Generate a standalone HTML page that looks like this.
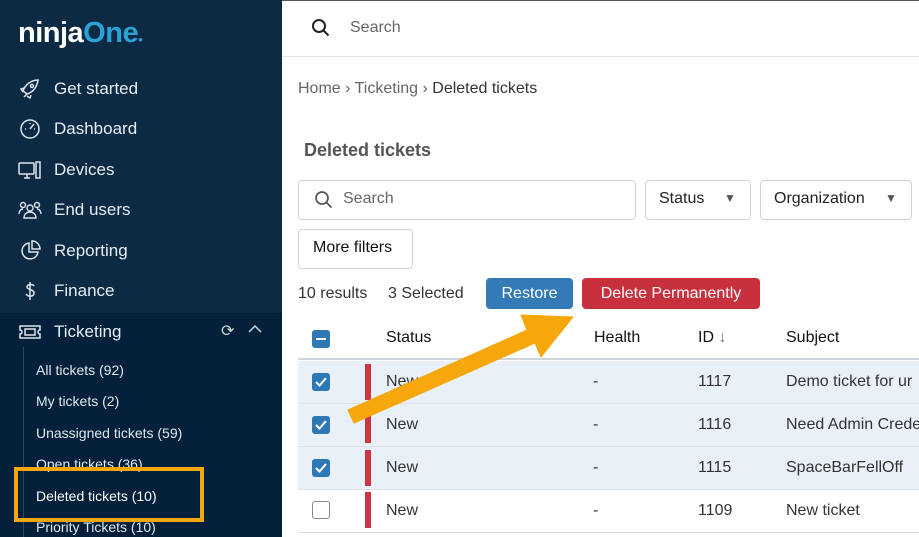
<!DOCTYPE html><html><head><style>
*{margin:0;padding:0;box-sizing:border-box}
body{width:919px;height:537px;overflow:hidden;font-family:"Liberation Sans",sans-serif;background:#fff;position:relative}
.sb{position:absolute;left:0;top:0;width:282px;height:537px;background:#0c2a44}
.sb2{position:absolute;left:0;top:313px;width:282px;height:224px;background:#05203a}
.logo{position:absolute;left:18px;top:17px;font-size:29px;font-weight:bold;color:#fff;letter-spacing:-0.5px}
.logo span{color:#29a3d8}
.nav{position:absolute;left:54px;color:#e6edf3;font-size:17px}
.ic{position:absolute;left:18px;width:24px;height:24px}
.sub{position:absolute;left:36px;color:#e0e7ee;font-size:14px}
.t{position:absolute;white-space:nowrap}
.box{position:absolute;border:1px solid #cfd3d8;border-radius:4px;background:#fff}
.row{position:absolute;left:298px;width:621px;height:43px;border-bottom:1px solid #dde1e6}
.cb{position:absolute;left:312px;width:18px;height:18px;border-radius:3px;background:#2f78b6}
.red{position:absolute;left:365px;width:6px;height:36px;background:#d03344}
</style></head><body>
<div style="position:absolute;left:0;top:0;width:919px;height:1px;background:#555"></div>
<div class="sb"></div><div class="sb2"></div>
<div class="logo">ninja<span>One</span><span style="font-size:8px">●</span></div>
<svg class="ic" style="top:77px" viewBox="0 0 24 24" fill="none" stroke="#dfe6ec" stroke-width="1.5"><path d="M5 14c2-6 8-11 15-11-1 7-5 12-11 14zM9 17l-3 3M6 11l-3 1 2 3M13 18l-1 3-3-2"/><circle cx="14" cy="9" r="1.5"/></svg>
<div class="nav" style="top:79px">Get started</div>
<svg class="ic" style="top:117px" viewBox="0 0 24 24" fill="none" stroke="#dfe6ec" stroke-width="1.5"><circle cx="12" cy="12" r="9"/><path d="M12 12l4-5M7 12h1M12 6v1M16 12h1"/></svg>
<div class="nav" style="top:119px">Dashboard</div>
<svg class="ic" style="top:158px" viewBox="0 0 24 24" fill="none" stroke="#dfe6ec" stroke-width="1.5"><rect x="1" y="5" width="15" height="11" rx="1"/><path d="M6 20h6M9 16v4"/><rect x="18" y="4" width="4" height="16"/></svg>
<div class="nav" style="top:160px">Devices</div>
<svg class="ic" style="top:198px" viewBox="0 0 24 24" fill="none" stroke="#dfe6ec" stroke-width="1.4"><circle cx="5" cy="7" r="2.5"/><circle cx="19" cy="7" r="2.5"/><circle cx="12" cy="10" r="3"/><path d="M6 20c0-4 3-6 6-6s6 2 6 6zM1 16c0-3 2-5 4-5M23 16c0-3-2-5-4-5"/></svg>
<div class="nav" style="top:200px">End users</div>
<svg class="ic" style="top:239px" viewBox="0 0 24 24" fill="none" stroke="#dfe6ec" stroke-width="1.5"><path d="M11 4a8 8 0 1 0 9 9h-9zM14 2v8h8a8 8 0 0 0-8-8z"/></svg>
<div class="nav" style="top:241px">Reporting</div>
<svg class="ic" style="top:279px" viewBox="0 0 24 24" fill="none" stroke="#dfe6ec" stroke-width="1.5"><path d="M16 7c-1-2-7-2-7 1s7 2 7 6-6 4-8 1M12 3v18"/></svg>
<div class="nav" style="top:281px">Finance</div>
<svg class="ic" style="top:320px" viewBox="0 0 24 24" fill="none" stroke="#dfe6ec" stroke-width="1.5"><path d="M2 6h20v4a2 2 0 0 0 0 4v4H2v-4a2 2 0 0 0 0-4z"/><rect x="7" y="9" width="10" height="6"/></svg>
<div class="nav" style="top:322px">Ticketing</div>
<div class="t" style="left:221px;top:321px;color:#cfd8e0;font-size:16px">⟳</div>
<svg style="position:absolute;left:248px;top:324px" width="14" height="10" viewBox="0 0 14 10" fill="none" stroke="#cfd8e0" stroke-width="1.5"><path d="M1 8l6-6 6 6"/></svg>
<div style="position:absolute;left:23px;top:347px;width:1px;height:190px;background:#2a4862"></div>
<div class="sub" style="top:362px">All tickets (92)</div>
<div class="sub" style="top:393px">My tickets (2)</div>
<div class="sub" style="top:425px">Unassigned tickets (59)</div>
<div class="sub" style="top:456px">Open tickets (36)</div>
<div class="sub" style="top:488px;color:#fff">Deleted tickets (10)</div>
<div class="sub" style="top:519px">Priority Tickets (10)</div>
<div style="position:absolute;left:14px;top:467px;width:190px;height:55px;border:4px solid #f5a70b"></div>

<div style="position:absolute;left:282px;top:56px;width:637px;height:1px;background:#dfe2e6"></div>
<svg style="position:absolute;left:311px;top:18px" width="20" height="20" viewBox="0 0 20 20" fill="none" stroke="#222" stroke-width="2"><circle cx="8" cy="8" r="6"/><path d="M12.5 12.5l5 5"/></svg>
<div class="t" style="left:350px;top:19px;color:#666;font-size:16px">Search</div>
<div class="t" style="left:298px;top:80px;color:#666;font-size:16px">Home › Ticketing › <span style="color:#333">Deleted tickets</span></div>
<div class="t" style="left:304px;top:140px;color:#555;font-size:18px;font-weight:bold">Deleted tickets</div>
<div class="box" style="left:298px;top:180px;width:338px;height:40px"></div>
<svg style="position:absolute;left:314px;top:190px" width="20" height="20" viewBox="0 0 20 20" fill="none" stroke="#555" stroke-width="1.7"><circle cx="8" cy="8" r="6"/><path d="M12.5 12.5l5 5"/></svg>
<div class="t" style="left:343px;top:190px;color:#666;font-size:16px">Search</div>
<div class="box" style="left:645px;top:180px;width:106px;height:40px"></div>
<div class="t" style="left:659px;top:190px;color:#222;font-size:16px">Status</div>
<div class="t" style="left:724px;top:191px;color:#555;font-size:12px">▼</div>
<div class="box" style="left:760px;top:180px;width:152px;height:40px"></div>
<div class="t" style="left:774px;top:190px;color:#222;font-size:16px">Organization</div>
<div class="t" style="left:885px;top:191px;color:#555;font-size:12px">▼</div>
<div class="box" style="left:298px;top:229px;width:115px;height:40px"></div>
<div class="t" style="left:313px;top:239px;color:#111;font-size:16px">More filters</div>
<div class="t" style="left:298px;top:285px;color:#333;font-size:16px">10 results</div>
<div class="t" style="left:388px;top:285px;color:#333;font-size:16px">3 Selected</div>
<div style="position:absolute;left:486px;top:278px;width:87px;height:31px;background:#337ab7;border-radius:4px;color:#fff;font-size:16px;text-align:center;line-height:31px">Restore</div>
<div style="position:absolute;left:582px;top:278px;width:178px;height:31px;background:#c9303e;border-radius:4px;color:#fff;font-size:16px;text-align:center;line-height:31px">Delete Permanently</div>
<div style="position:absolute;left:298px;top:316px;width:621px;height:44px;border-bottom:2px solid #cfd4da"></div>
<div class="cb" style="top:330px"><div style="position:absolute;left:4px;top:8px;width:10px;height:2px;background:#fff"></div></div>
<div class="t" style="left:386px;top:329px;color:#111;font-size:16px">Status</div>
<div class="t" style="left:594px;top:329px;color:#111;font-size:16px">Health</div>
<div class="t" style="left:698px;top:329px;color:#111;font-size:16px">ID <span style="color:#777">↓</span></div>
<div class="t" style="left:786px;top:329px;color:#111;font-size:16px">Subject</div>

<div class="row" style="top:361px;background:#e9f0f7"></div>
<div class="row" style="top:404px;background:#e9f0f7"></div>
<div class="row" style="top:447px;background:#e9f0f7"></div>
<div class="row" style="top:490px"></div>
<div class="red" style="top:364px"></div><div class="red" style="top:407px"></div><div class="red" style="top:450px"></div><div class="red" style="top:492px"></div>
<svg class="cb" style="top:373px" viewBox="0 0 18 18"><path d="M4 9l3.5 3.5L14 5" stroke="#fff" stroke-width="2" fill="none"/></svg>
<svg class="cb" style="top:416px" viewBox="0 0 18 18"><path d="M4 9l3.5 3.5L14 5" stroke="#fff" stroke-width="2" fill="none"/></svg>
<svg class="cb" style="top:459px" viewBox="0 0 18 18"><path d="M4 9l3.5 3.5L14 5" stroke="#fff" stroke-width="2" fill="none"/></svg>
<div class="cb" style="top:501px;background:#fff;border:1px solid #888"></div>
<div class="t" style="left:386px;top:373px;color:#333;font-size:16px">New</div>
<div class="t" style="left:386px;top:416px;color:#333;font-size:16px">New</div>
<div class="t" style="left:386px;top:459px;color:#333;font-size:16px">New</div>
<div class="t" style="left:386px;top:502px;color:#333;font-size:16px">New</div>
<div class="t" style="left:593px;top:373px;color:#333;font-size:16px">-</div>
<div class="t" style="left:593px;top:416px;color:#333;font-size:16px">-</div>
<div class="t" style="left:593px;top:459px;color:#333;font-size:16px">-</div>
<div class="t" style="left:593px;top:502px;color:#333;font-size:16px">-</div>
<div class="t" style="left:698px;top:373px;color:#333;font-size:16px">1117</div>
<div class="t" style="left:698px;top:416px;color:#333;font-size:16px">1116</div>
<div class="t" style="left:698px;top:459px;color:#333;font-size:16px">1115</div>
<div class="t" style="left:698px;top:502px;color:#333;font-size:16px">1109</div>
<div class="t" style="left:786px;top:373px;color:#333;font-size:16px">Demo ticket for ur</div>
<div class="t" style="left:786px;top:416px;color:#333;font-size:16px">Need Admin Crede</div>
<div class="t" style="left:786px;top:459px;color:#333;font-size:16px">SpaceBarFellOff</div>
<div class="t" style="left:786px;top:502px;color:#333;font-size:16px">New ticket</div>
<svg style="position:absolute;left:0;top:0" width="919" height="537"><polygon points="348,410 527,330 521,315 573,317 541,357 535,343 354,423" fill="#f5a70b" stroke="#f5a70b" stroke-linejoin="round"/></svg>
</body></html>
